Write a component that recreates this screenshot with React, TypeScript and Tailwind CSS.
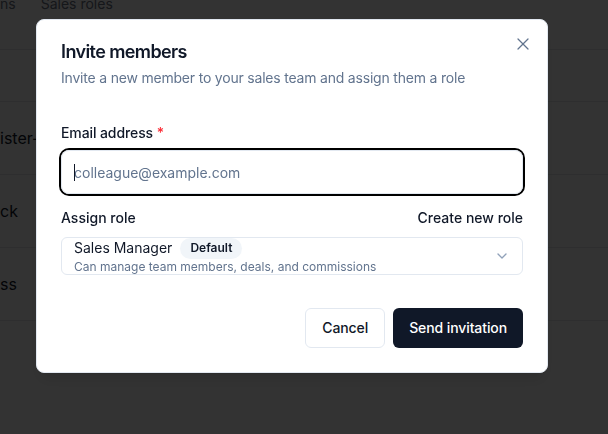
import { X, ChevronDown } from "lucide-react";

const rows = ["ister-Jones", "ck", "ss"];

function BackgroundPage() {
  return (
    <div className="min-h-screen bg-white text-gray-900">
      <div className="h-[50px] border-b border-gray-200">
        <div className="flex gap-[25px] -translate-y-[6px] text-sm text-gray-500">
          <span>ns</span>
          <span>Sales roles</span>
        </div>
      </div>
      <div className="h-[52px] border-b border-gray-200" />
      {rows.map((r) => (
        <div key={r} className="flex h-[73px] items-center border-b border-gray-200 text-base">
          <span>{r}</span>
        </div>
      ))}
    </div>
  );
}

function InviteDialog() {
  return (
    <div className="fixed left-[36px] top-[19px] w-[512px] rounded-lg border border-slate-200 bg-white px-6 pt-[18px] pb-6 shadow-lg">
      <button className="absolute right-[14px] top-[14px] text-slate-500">
        <X size={20} strokeWidth={1.5} />
      </button>
      <h2 className="text-lg leading-7 font-semibold tracking-[-0.6px] text-gray-900">Invite members</h2>
      <p className="mt-[2px] text-sm leading-5 tracking-[-0.2px] text-slate-500">
        Invite a new member to your sales team and assign them a role
      </p>

      <label className="mt-[35px] block text-sm leading-5 font-medium tracking-[-0.1px] text-gray-900">
        Email address <span className="text-red-500">*</span>
      </label>
      <div className="relative mt-[7px]">
        <input
          placeholder="colleague@example.com"
          className="h-11 w-full rounded-lg border border-slate-200 px-3 text-sm text-gray-900 placeholder:text-slate-500 outline-none ring-2 ring-black"
        />
        <span className="absolute left-[13px] top-[14px] h-[17px] w-px bg-gray-900" />
      </div>

      <div className="mt-[14px] flex items-center justify-between text-sm leading-5 text-gray-900">
        <span className="font-medium">Assign role</span>
        <button className="font-medium">Create new role</button>
      </div>
      <div className="mt-[9px] flex h-[38px] items-center justify-between rounded-md border border-slate-200 pl-3 pr-3">
        <div className="flex flex-col">
          <div className="flex h-[21px] items-center gap-2">
            <span className="text-sm text-gray-900">Sales Manager</span>
            <span className="flex h-[21px] items-center rounded-full bg-slate-100 px-[10px] text-xs font-semibold text-gray-900">
              Default
            </span>
          </div>
          <span className="text-xs leading-4 text-slate-500">
            Can manage team members, deals, and commissions
          </span>
        </div>
        <ChevronDown size={16} className="text-slate-400" />
      </div>

      <div className="mt-[33px] flex justify-end gap-2">
        <button className="h-10 rounded-md border border-slate-200 bg-white px-4 text-sm font-medium tracking-[-0.1px] text-gray-900">
          Cancel
        </button>
        <button className="h-10 rounded-md bg-gray-900 px-4 text-sm font-medium tracking-[-0.1px] text-white">
          Send invitation
        </button>
      </div>
    </div>
  );
}

export default function App() {
  return (
    <div className="relative h-[434px] overflow-hidden" style={{ fontFamily: "Inter, 'Noto Sans', sans-serif" }}>
      <BackgroundPage />
      <div className="fixed inset-0 bg-black/80" />
      <InviteDialog />
    </div>
  );
}
